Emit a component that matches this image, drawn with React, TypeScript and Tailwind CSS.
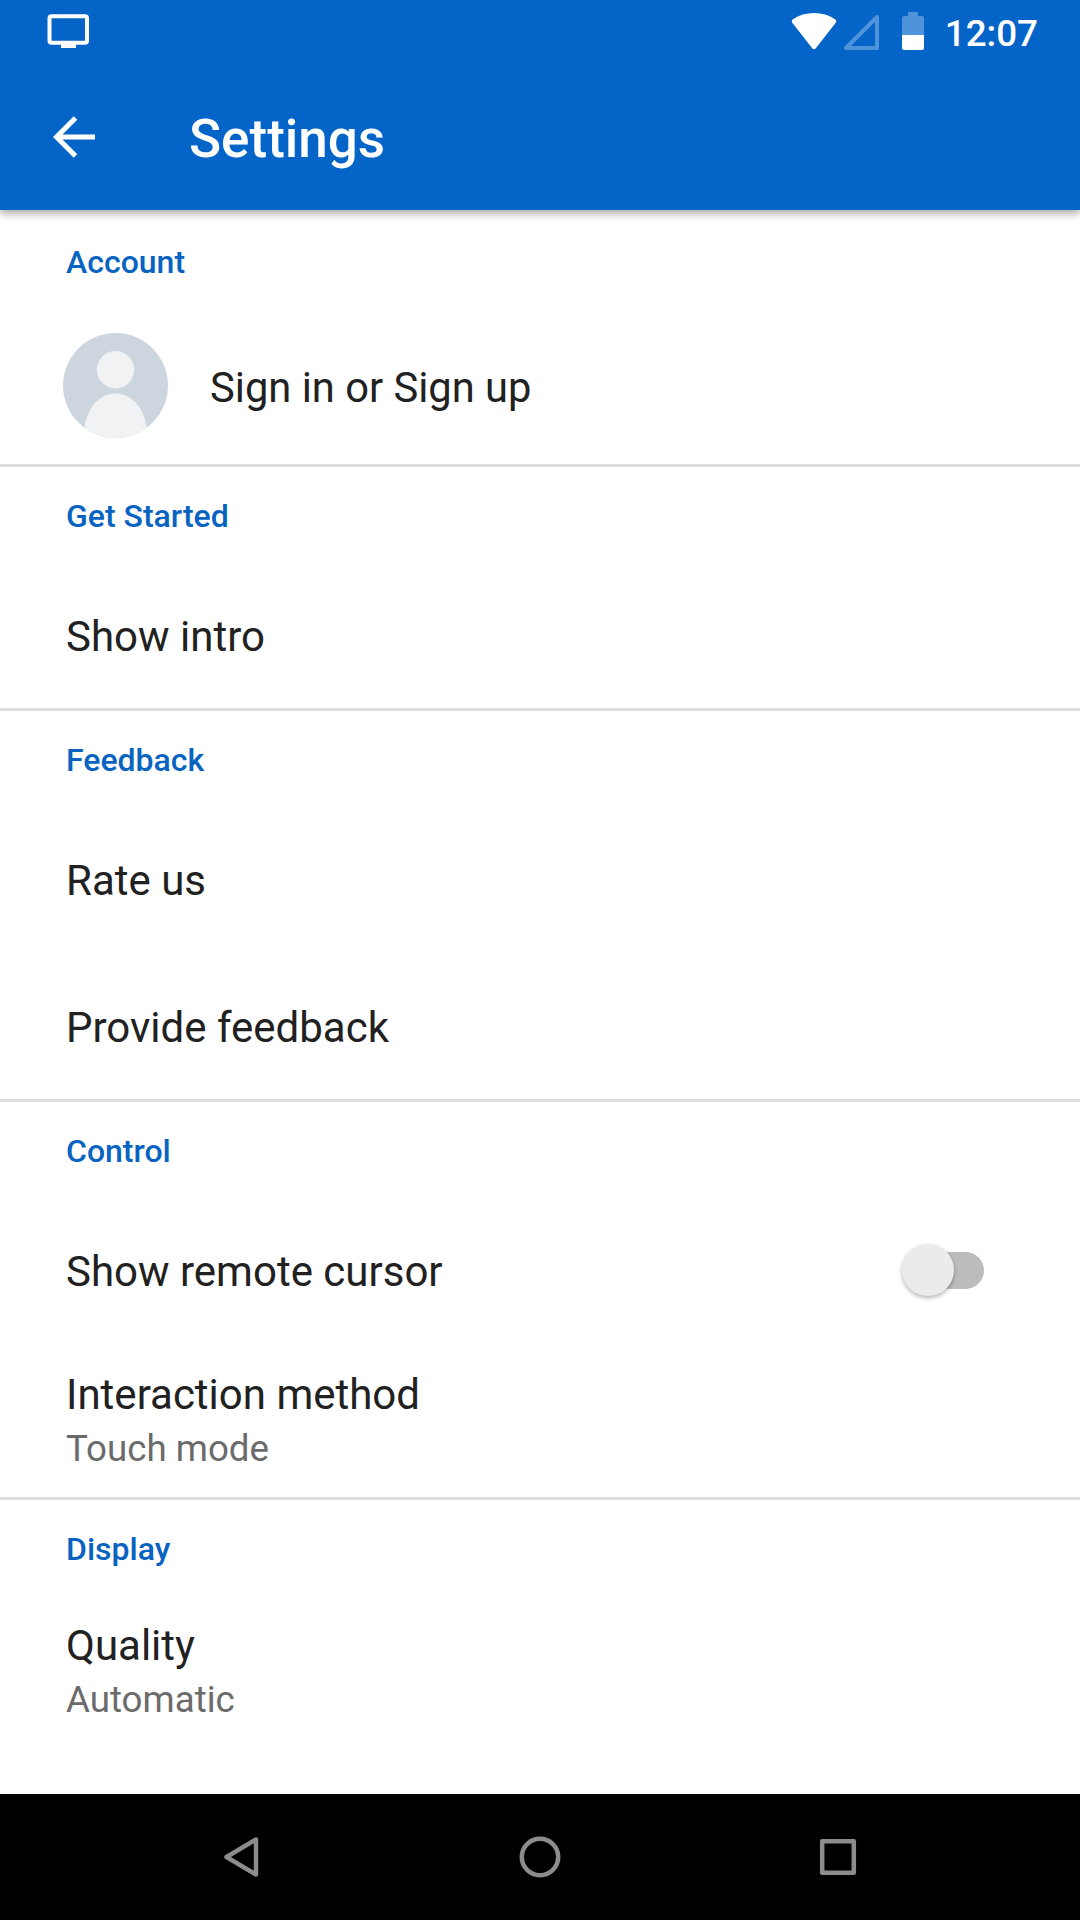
import type { ReactNode } from "react";

function StatusBar() {
  return (
    <div className="flex h-[63px] items-start justify-between">
      <svg className="mt-[14px] ml-[47px] h-[35px] w-[43px]" viewBox="0 0 43 35">
        <rect x="2.5" y="2.3" width="37.5" height="26.5" rx="2" fill="none" stroke="#fff" strokeWidth="4" />
        <path d="M14 28h15v6H14z" fill="#fff" />
      </svg>
      <div className="mr-[42px] flex items-start">
        <svg className="h-[63px] w-[152px]" viewBox="788 0 152 63">
          <path d="M792.5 23Q790.8 20.8 793 19.3Q802 13 814 13Q826 13 835 19.3Q837.2 20.8 835.5 23L816 48Q814 50.5 812 48Z" fill="#fff" />
          <path d="M877 17V48H846Z" fill="none" stroke="#4f94db" strokeWidth="4" strokeLinejoin="round" />
          <path d="M902 35V18q0-2 2-2h4v-4h10v4h4q2 0 2 2v17z" fill="#4f94db" />
          <path d="M902 35h22v13q0 2-2 2h-18q-2 0-2-2z" fill="#fff" />
        </svg>
        <span className="mt-[12px] ml-[5px] text-[36.75px] leading-[43px] font-medium text-white">12:07</span>
      </div>
    </div>
  );
}

function Row({ title, value, children }: { title: string; value?: string; children?: ReactNode }) {
  return (
    <div className={value ? "flex h-[154px] items-start pt-[27px] pl-[66px]" : "flex h-[147px] items-center pl-[66px]"}>
      <div className={value ? "flex-1" : "flex-1 pt-[4px]"}>
        <div className="text-[42px] leading-[50px] text-[#212121]">{title}</div>
        {value && <div className="mt-[6px] text-[36.7px] leading-[46px] text-[#6b6b6b]">{value}</div>}
      </div>
      {children}
    </div>
  );
}

function Section({ title, first, last, children }: { title: string; first?: boolean; last?: boolean; children: ReactNode }) {
  return (
    <section className={last ? "" : "border-b-[3px] border-[#dedede]"}>
      <h2 className={`${first ? "pt-[33px]" : "pt-[30px]"} h-[94px] pl-[66px] text-[32px] leading-[38px] font-medium text-[#0863c1]`}>{title}</h2>
      {children}
    </section>
  );
}

function Toggle() {
  return (
    <div className="mt-px mr-[96px] flex h-[54px] w-[83px] items-center" role="switch" aria-checked="false">
      <div className="ml-[16px] flex h-[37px] w-[67px] items-center rounded-full bg-[#bcbcbc]">
        <div className="-ml-[15px] h-[52px] w-[52px] shrink-0 rounded-full bg-[#ebebeb] shadow-[0_2px_4px_rgba(0,0,0,0.3)]" />
      </div>
    </div>
  );
}

export default function App() {
  return (
    <div className="flex h-[1920px] w-[1080px] flex-col overflow-hidden bg-white font-['Roboto',sans-serif]">
      <header className="relative z-10 h-[210px] shrink-0 bg-[#0464c8] shadow-[0_4px_8px_rgba(0,0,0,0.32)]">
        <StatusBar />
        <div className="flex h-[147px] items-center">
          <svg className="ml-[53px] h-[42px] w-[42px]" viewBox="0 0 42 42">
            <path d="M42 21H4M22.5 2L3.5 21l19 19" fill="none" stroke="#fff" strokeWidth="5" />
          </svg>
          <h1 className="ml-[94px] pt-[4px] text-[53px] leading-[62px] font-medium text-white">Settings</h1>
        </div>
      </header>
      <main className="min-h-0 flex-1">
        <Section title="Account" first>
          <div className="flex h-[160px] items-center pt-[2px] pl-[63px]">
            <svg className="h-[105px] w-[105px]" viewBox="0 0 105 105">
              <defs>
                <clipPath id="avatar"><circle cx="52.5" cy="52.5" r="52.5" /></clipPath>
              </defs>
              <g clipPath="url(#avatar)">
                <path d="M0 0h105v105H0z" fill="#cdd6df" />
                <circle cx="52.5" cy="36.8" r="18.7" fill="#f0f2f4" />
                <path d="M21.5 105V96C23 76 36 60.5 52.5 60.5S82 76 83.5 96V105Z" fill="#f0f2f4" />
              </g>
            </svg>
            <span className="ml-[42px] pt-[6px] text-[41.7px] leading-[50px] text-[#212121]">Sign in or Sign up</span>
          </div>
        </Section>
        <Section title="Get Started">
          <Row title="Show intro" />
        </Section>
        <Section title="Feedback">
          <Row title="Rate us" />
          <Row title="Provide feedback" />
        </Section>
        <Section title="Control">
          <Row title="Show remote cursor"><Toggle /></Row>
          <Row title="Interaction method" value="Touch mode" />
        </Section>
        <Section title="Display" last>
          <Row title="Quality" value="Automatic" />
        </Section>
      </main>
      <nav className="flex h-[126px] shrink-0 items-center justify-center bg-black">
        <svg className="h-[126px] w-[720px]" viewBox="180 1794 720 126" fill="none" stroke="#8c8c8c" strokeWidth="4.5" strokeLinejoin="round">
          <path d="M256 1839.5V1874.5L226.5 1857Z" />
          <circle cx="540" cy="1857" r="18.2" />
          <rect x="822.2" y="1841.2" width="31.6" height="31.6" />
        </svg>
      </nav>
    </div>
  );
}
